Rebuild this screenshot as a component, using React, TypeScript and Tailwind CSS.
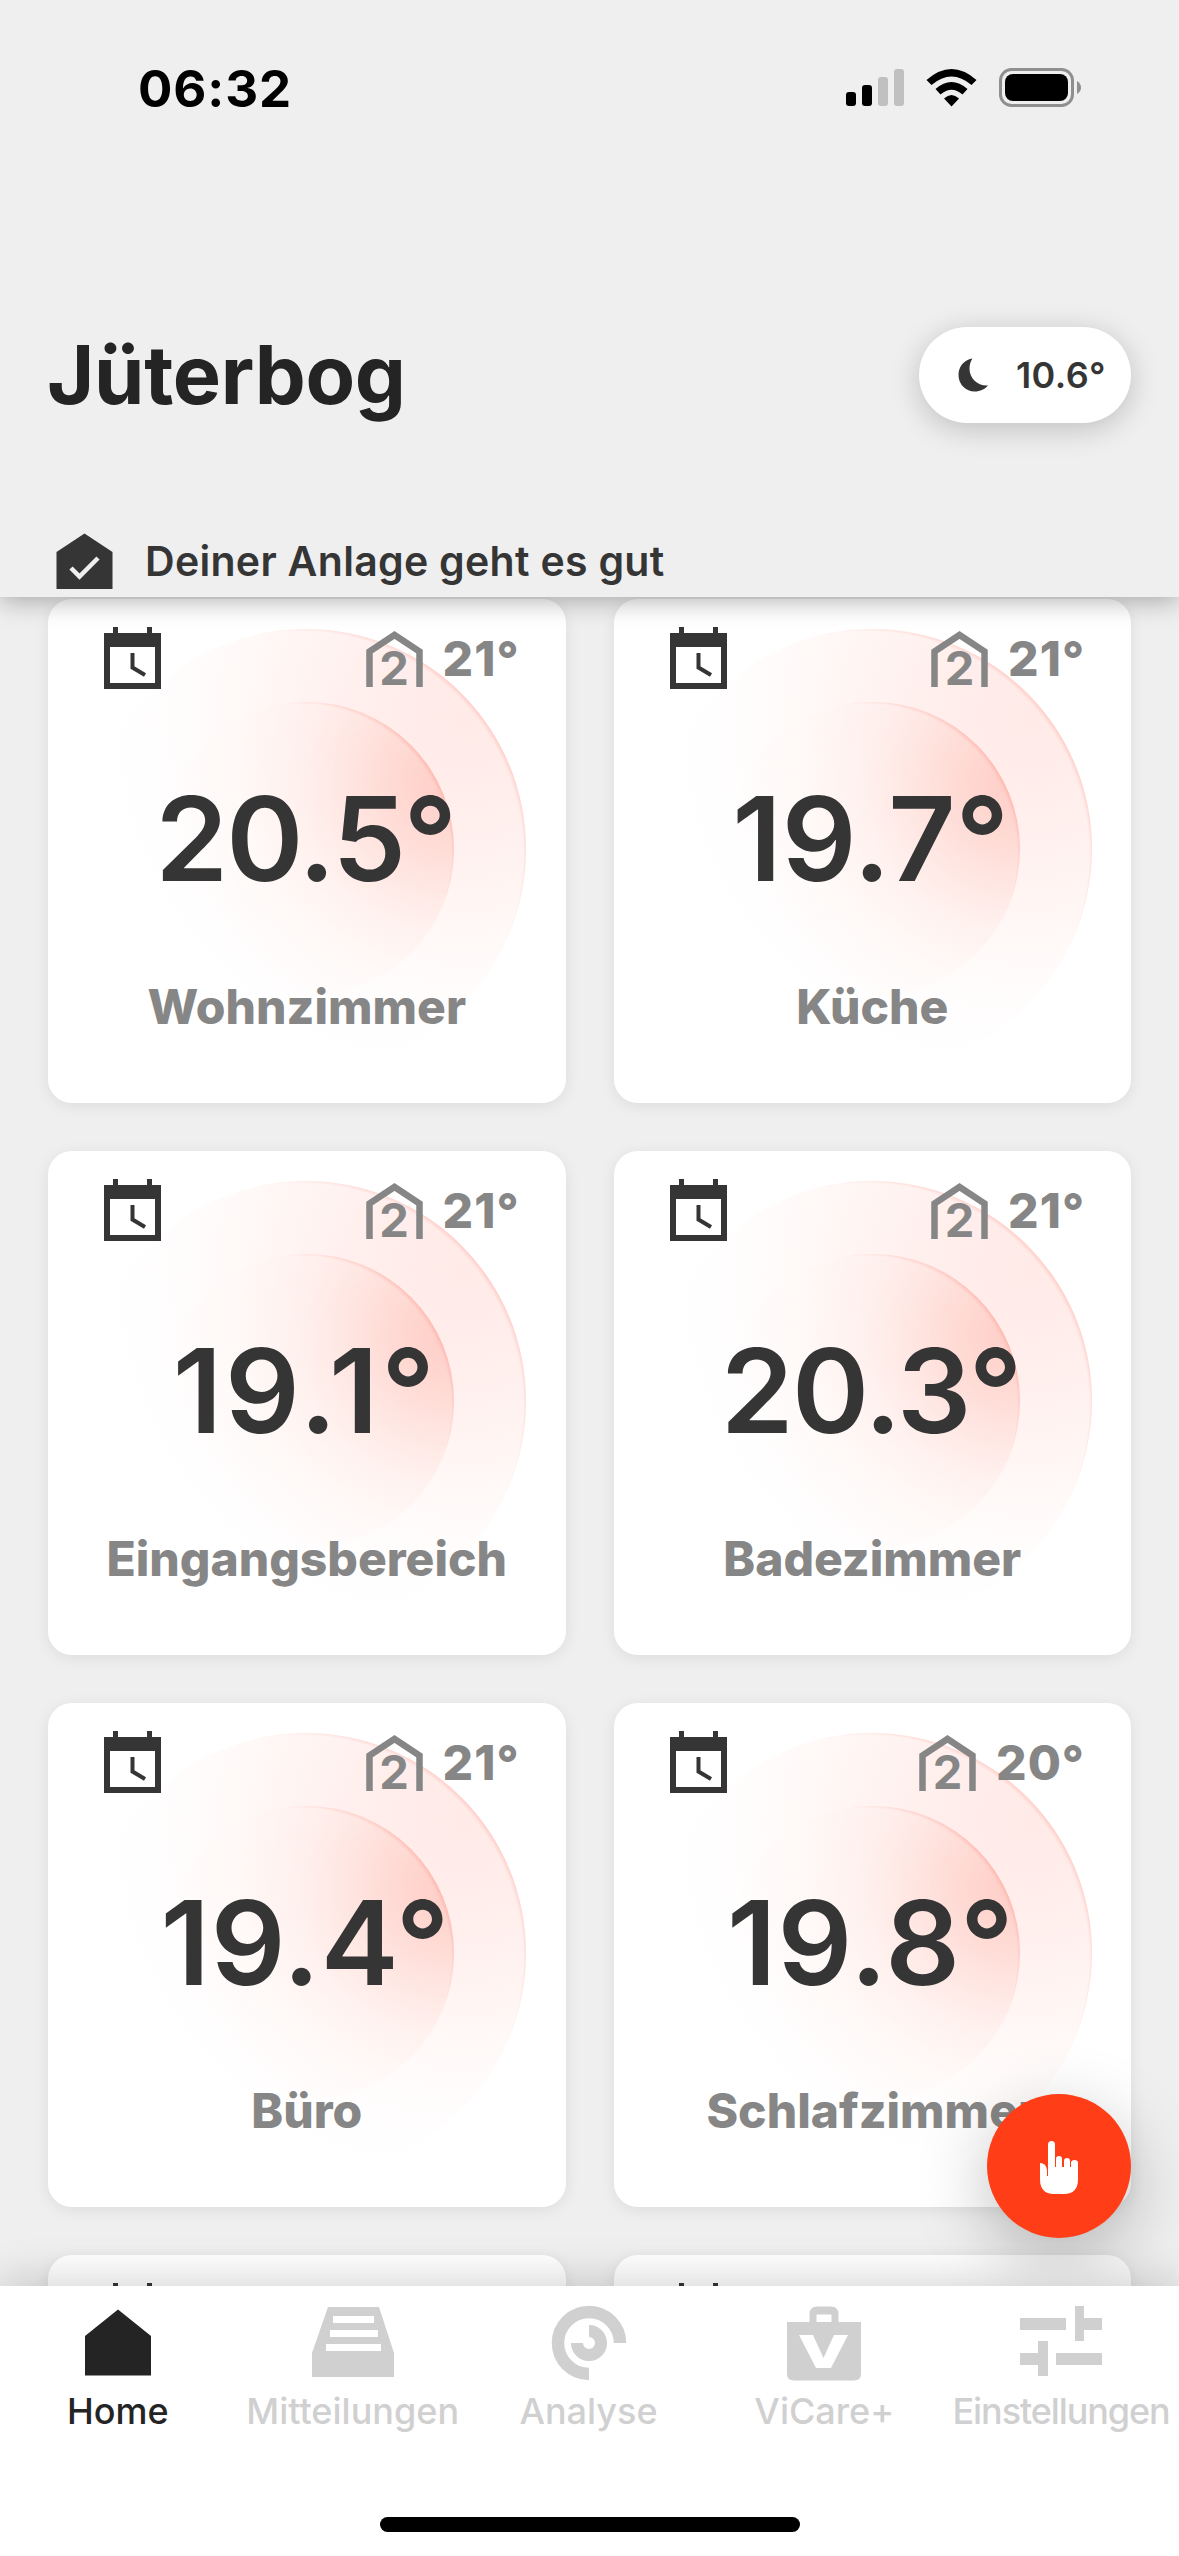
import type { ReactNode } from "react";

const rooms = [
  { name: "Wohnzimmer", current: "20.5°", target: "21°", tracking: "tracking-[-2px]" },
  { name: "Küche", current: "19.7°", target: "21°", tracking: "tracking-[0px]" },
  { name: "Eingangsbereich", current: "19.1°", target: "21°", tracking: "tracking-[2.8px]" },
  { name: "Badezimmer", current: "20.3°", target: "21°", tracking: "tracking-[-1.6px]" },
  { name: "Büro", current: "19.4°", target: "21°", tracking: "tracking-[0.6px]" },
  { name: "Schlafzimmer", current: "19.8°", target: "20°", tracking: "tracking-[1px]" },
  { name: "", current: "", target: "", tracking: "" },
  { name: "", current: "", target: "", tracking: "" },
];

function StatusBar() {
  return (
    <div className="flex h-[176px] items-center justify-between pl-[138px] pr-[97px]">
      <span className="text-[51px] font-bold leading-none tracking-[0.9px] text-black">06:32</span>
      <div className="flex items-center">
        <svg width="58" height="38" viewBox="0 0 58 38">
          <rect x="0" y="23" width="10" height="14" rx="3" fill="#000" />
          <rect x="16" y="16" width="10" height="21" rx="3" fill="#000" />
          <rect x="32" y="8" width="10" height="29" rx="3" fill="#c0c0c0" />
          <rect x="48" y="0" width="10" height="37" rx="3" fill="#c0c0c0" />
        </svg>
        <svg className="ml-[22px]" width="51" height="38" viewBox="0 0 51 38">
          <path d="M0.5 11 Q25.500 -11 50.500 11 L45.500 16 Q25.500 -1 5.500 16Z" fill="#000" />
          <path d="M9.500 20 Q25.500 6 41.500 20 L36.500 25.500 Q25.500 16 14.500 25.500Z" fill="#000" />
          <path d="M18 29.500 Q25.500 22.500 33 29.500 L25.500 37.500Z" fill="#000" />
        </svg>
        <svg className="ml-[22px]" width="83" height="40" viewBox="0 0 83 40">
          <rect x="1.500" y="1.500" width="72" height="36" rx="11" fill="none" stroke="#8f8f8f" strokeWidth="3" />
          <rect x="6" y="6" width="63" height="27" rx="8" fill="#000" />
          <path d="M78 13 Q82 15.500 82 19.500 Q82 23.500 78 26Z" fill="#8f8f8f" />
        </svg>
      </div>
    </div>
  );
}

function Header() {
  return (
    <header className="relative z-10 h-[597px] bg-[#efefef] shadow-[0_4px_24px_rgba(0,0,0,0.3)]">
      <StatusBar />
      <div className="mt-[151px] flex h-24 items-center justify-between pl-[47px] pr-12">
        <h1 className="text-[81px] font-bold leading-none tracking-[-0.3px] text-[#242424]">Jüterbog</h1>
        <div className="flex h-24 w-[212px] items-center rounded-full bg-white pl-[39px] shadow-[0_6px_30px_rgba(0,0,0,0.2)]">
          <svg width="31" height="34" viewBox="0 0 31 34">
            <path d="M14.500 0.500 C5 2 0.500 9.500 0.500 17 C0.500 26.500 8 33.500 16.500 33.500 C22.500 33.500 27 31 30 27.500 C19 28 11.500 20 11.500 10.500 C11.500 6.500 12.500 3.500 14.500 0.500Z" fill="#353535" />
          </svg>
          <span className="ml-[27px] text-[36px] font-semibold leading-none tracking-[0.4px] text-[#353535]">10.6°</span>
        </div>
      </div>
      <div className="mt-[110px] flex items-center pl-14">
        <svg width="58" height="57" viewBox="0 0 58 57">
          <path d="M0.500 19 L28.500 0.500 L56.500 19 V56 H0.500Z" fill="#353535" />
          <path d="M15 35 L23.500 43.500 L42 25" fill="none" stroke="#efefef" strokeWidth="4.500" />
        </svg>
        <span className="ml-[31px] text-[41px] font-semibold leading-none tracking-[0.3px] text-[#353535]">Deiner Anlage geht es gut</span>
      </div>
    </header>
  );
}

function CalendarClock() {
  return (
    <svg width="57" height="63" viewBox="0 0 57 63">
      <path d="M9 0 H14 V6 H43 V0 H48 V6 H57 V62 H0 V6 H9Z M6 20 V56 H51 V20Z" fill="#353535" fillRule="evenodd" />
      <path d="M28.500 26 V40.500 L41 48" fill="none" stroke="#353535" strokeWidth="4" />
    </svg>
  );
}

function HouseLevel() {
  return (
    <div className="relative h-[58px] w-[57px]">
      <svg width="57" height="57" viewBox="0 0 57 57">
        <path d="M3.500 56 V20.500 L28.500 4 L53.500 20.500 V56" fill="none" stroke="#868686" strokeWidth="6.500" />
      </svg>
      <span className="absolute inset-x-0 bottom-0 text-center text-[47px] font-bold leading-[42px] text-[#868686]">2</span>
    </div>
  );
}

// two discs, each with a thin crescent of stronger red on the upper right rim
function Glow() {
  return (
    <>
      <div className="absolute left-[38px] top-[30px] size-[440px] rounded-full bg-[radial-gradient(circle_at_214px_225px,rgba(255,110,95,0)_223px,rgba(255,110,95,0.3)_229px),radial-gradient(circle_at_86%_20%,#ffeae7_0px,#ffeeec_90px,#fff5f3_180px,#fffbfa_250px,#fffefe_320px,#ffffff_380px)]" />
      <div className="absolute left-[112px] top-[103px] size-[294px] rounded-full bg-[radial-gradient(circle_at_141px_152px,rgba(255,110,95,0)_150px,rgba(255,110,95,0.32)_156px),radial-gradient(circle_at_98%_28%,rgba(255,200,192,0.85)_0px,rgba(255,212,205,0.75)_60px,rgba(255,225,220,0.6)_110px,rgba(255,236,232,0.5)_150px,rgba(255,247,245,0.35)_210px,rgba(255,255,255,0)_280px)]" />
    </>
  );
}

function RoomCard({ name, current, target, tracking }: { name: string; current: string; target: string; tracking: string }) {
  return (
    <div className="relative h-[504px] overflow-hidden rounded-[24px] bg-white">
      {name && <Glow />}
      <div className="relative flex h-full flex-col items-center">
        <div className="flex w-full items-start justify-between pl-14 pr-[46px] pt-[28px]">
          <CalendarClock />
          {name && (
            <div className="flex items-start pt-[4px]">
              <HouseLevel />
              <span className="ml-[20px] mt-[4px] text-[48px] font-extrabold leading-[48px] tracking-[1px] text-[#868686]">{target}</span>
            </div>
          )}
        </div>
        <div className={`mr-[3px] mt-[89px] text-[117px] font-semibold leading-[120px] text-[#353535] ${tracking}`}>{current}</div>
        <div className="mt-[80px] text-[48px] font-extrabold leading-[56px] text-[#868686]">{name}</div>
      </div>
    </div>
  );
}

const tabs: { label: string; icon: ReactNode; className: string }[] = [
  {
    label: "Home",
    className: "text-[#242424]",
    icon: <path d="M11 38 L44 11.500 L77 38 V77.500 H11Z" />,
  },
  {
    label: "Mitteilungen",
    className: "pr-[2px] text-[#d0d0d0]",
    icon: <path fillRule="evenodd" d="M19 9 H70 L85 55 V79 H3 V55Z M24 18 V25 H65 V18Z M21 32 V39 H69 V32Z M17 46 V53 H72 V46Z" />,
  },
  {
    label: "Analyse",
    className: "pr-[2px] text-[#d0d0d0]",
    icon: (
      <g fill="none" stroke="currentColor">
        <path d="M76 45 A31 31 0 1 0 45 76" strokeWidth="12.500" />
        <path d="M45 33 A12 12 0 1 1 33 45" strokeWidth="12" />
      </g>
    ),
  },
  {
    label: "ViCare+",
    className: "pr-[2px] text-[#d0d0d0]",
    icon: (
      <>
        <path fillRule="evenodd" d="M7 24 H29.500 V16 Q29.500 8.500 37 8.500 H51 Q58.500 8.500 58.500 16 V24 H81 V76 Q81 82.500 74 82.500 H14 Q7 82.500 7 76Z M36.500 16.500 V24 H51.500 V16.500Z" />
        <path d="M19 37 H33 L43.500 60 L54 37 H68 L51 70 H36Z" fill="#fff" />
      </>
    ),
  },
  {
    label: "Einstellungen",
    className: "tracking-[-1.1px] text-[#d0d0d0]",
    icon: <path d="M3 20 H49 V32 H3Z M58 8 H67 V20 H85 V32 H67 V43 H58Z M3 55 H21 V43 H31 V78 H21 V67 H3Z M39 55 H85 V67 H39Z" />,
  },
];

function TabBar() {
  return (
    <nav className="relative z-10 h-[270px] bg-white shadow-[0_-6px_40px_rgba(0,0,0,0.17)]">
      <div className="flex">
        {tabs.map((tab) => (
          <div key={tab.label} className={`flex w-1/5 flex-col items-center pt-[12px] ${tab.className}`}>
            <svg width="88" height="88" viewBox="0 0 88 88" fill="currentColor">
              {tab.icon}
            </svg>
            <span className="mt-[4px] whitespace-nowrap text-[36px] font-medium leading-[42px]">{tab.label}</span>
          </div>
        ))}
      </div>
      <div className="mx-auto mt-[85px] h-[15px] w-[420px] rounded-full bg-black" />
    </nav>
  );
}

export default function App() {
  return (
    <div className="relative flex h-[2556px] w-[1179px] flex-col overflow-hidden bg-[#efefef] font-['Inter',sans-serif]">
      <Header />
      <main className="h-[1689px] shrink-0 overflow-hidden px-12 pt-[2px]">
        <div className="grid grid-cols-2 gap-12">
          {rooms.map((room, i) => (
            <div key={i} className="rounded-[24px] shadow-[0_3px_15px_rgba(0,0,0,0.08)]">
              <RoomCard {...room} />
            </div>
          ))}
        </div>
      </main>
      <TabBar />
      {/* overlaps the last cards and casts its shadow over them */}
      <button className="absolute left-[987px] top-[2094px] flex size-36 items-center justify-center rounded-full bg-[#ff3e17] shadow-[0_20px_70px_rgba(0,0,0,0.25)]">
        <svg className="mt-[3px]" width="38" height="54" viewBox="0 0 38 54" fill="#fff">
          <path d="M0 22 Q6 22 7 29 V35 H8 V3.500 Q8 0 11.500 0 Q15 0 15 3.500 V26 H16 V18 Q16 15 19 15 Q22 15 22 18 V26 H24 V20 Q24 17 27 17 Q30 17 30 20 V26 H31 V22 Q31 19 34.500 19 Q38 19 38 22 V38 Q38 53 24 53 H14 Q0 53 0 38Z" />
        </svg>
      </button>
    </div>
  );
}
